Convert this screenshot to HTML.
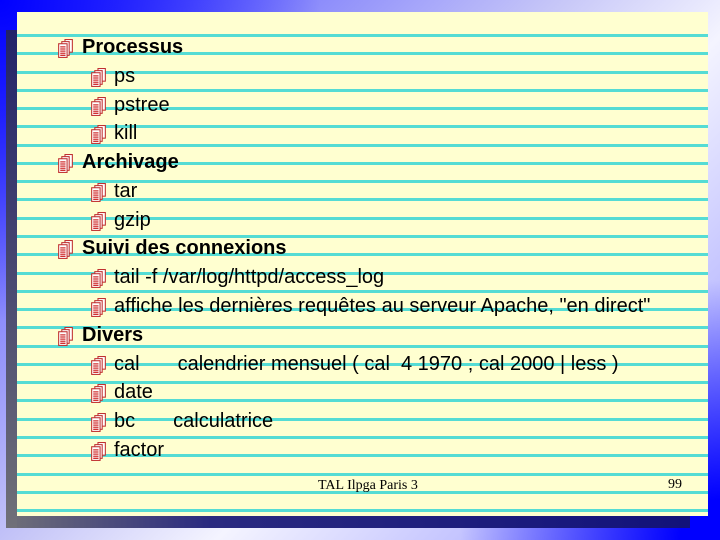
<!DOCTYPE html>
<html><head><style>
body{margin:0;width:720px;height:540px;overflow:hidden;position:relative;
background:
radial-gradient(circle at 0 0,#0000ff 0,#1010ff 60px,rgba(16,16,255,0) 320px),
radial-gradient(circle at 720px 540px,#0000ff 0,#0000ff 40px,rgba(0,0,255,0) 260px),
linear-gradient(135deg,#4040ff 0%,#c8c8f8 45%,#f4f4ff 60%,#9090ff 100%);
font-family:"Liberation Sans",sans-serif;}
.sh{position:absolute;left:6px;top:30px;width:684px;height:498px;background:linear-gradient(90deg,#707078 0%,#2a2a80 30%,#12127a 100%);}
.sh2{position:absolute;left:6px;top:30px;width:11px;height:498px;background:linear-gradient(180deg,#22226a,#707078);}
.paper{position:absolute;left:17px;top:12px;width:691px;height:504px;background:#ffffd0;}
.ln{position:absolute;left:17px;width:691px;height:3px;background:#55dcd4;}
.it{position:absolute;white-space:nowrap;color:#000;}
.l1{left:57px;font-size:20px;font-weight:bold;}
.l2{left:90px;font-size:20px;}
.it svg{position:absolute;left:0;top:3px;}
.l1 span{margin-left:25px}
.l2 span{margin-left:24px}
.ft{position:absolute;font-family:"Liberation Serif",serif;font-size:14px;}
</style></head><body>
<div class="sh"></div><div class="sh2"></div>
<div class="paper"></div>
<div id="lines"></div>
<script>
var h='';for(var i=0;i<27;i++){h+='<div class="ln" style="top:'+(34+i*18.27).toFixed(1)+'px"></div>';}
document.getElementById('lines').innerHTML=h;
var ic='<svg width="17" height="20" viewBox="0 0 16 19"><rect x="7.5" y="0.5" width="7" height="12" fill="#fff" stroke="#c03030"/><rect x="4.5" y="2.5" width="7" height="13" fill="#fff" stroke="#c03030"/><rect x="1.5" y="4.5" width="8" height="13" fill="#fff" stroke="#c03030"/><path d="M3 7.5h5M3 9.5h5M3 11.5h5M3 13.5h5M3 15.5h5" stroke="#d03030" stroke-width="1.2"/></svg>';
window.addEventListener('DOMContentLoaded',function(){document.querySelectorAll('.it').forEach(function(e){e.insertAdjacentHTML('afterbegin',ic);});});
</script>
<div class="it l1" style="top:36px"><span>Processus</span></div>
<div class="it l2" style="top:65px"><span>ps</span></div>
<div class="it l2" style="top:94px"><span>pstree</span></div>
<div class="it l2" style="top:122px"><span>kill</span></div>
<div class="it l1" style="top:151px"><span>Archivage</span></div>
<div class="it l2" style="top:180px"><span>tar</span></div>
<div class="it l2" style="top:209px"><span>gzip</span></div>
<div class="it l1" style="top:237px"><span>Suivi des connexions</span></div>
<div class="it l2" style="top:266px"><span>tail -f /var/log/httpd/access_log</span></div>
<div class="it l2" style="top:295px"><span>affiche les dernières requêtes au serveur Apache, "en direct"</span></div>
<div class="it l1" style="top:324px"><span>Divers</span></div>
<div class="it l2" style="top:353px"><span>cal<span style="margin-left:38px">calendrier mensuel ( cal&nbsp; 4 1970 ; cal 2000 | less )</span></span></div>
<div class="it l2" style="top:381px"><span>date</span></div>
<div class="it l2" style="top:410px"><span>bc<span style="margin-left:38px">calculatrice</span></span></div>
<div class="it l2" style="top:439px"><span>factor</span></div>
<div class="ft" style="left:318px;top:478px">TAL Ilpga Paris 3</div>
<div class="ft" style="left:668px;top:477px">99</div>
</body></html>
